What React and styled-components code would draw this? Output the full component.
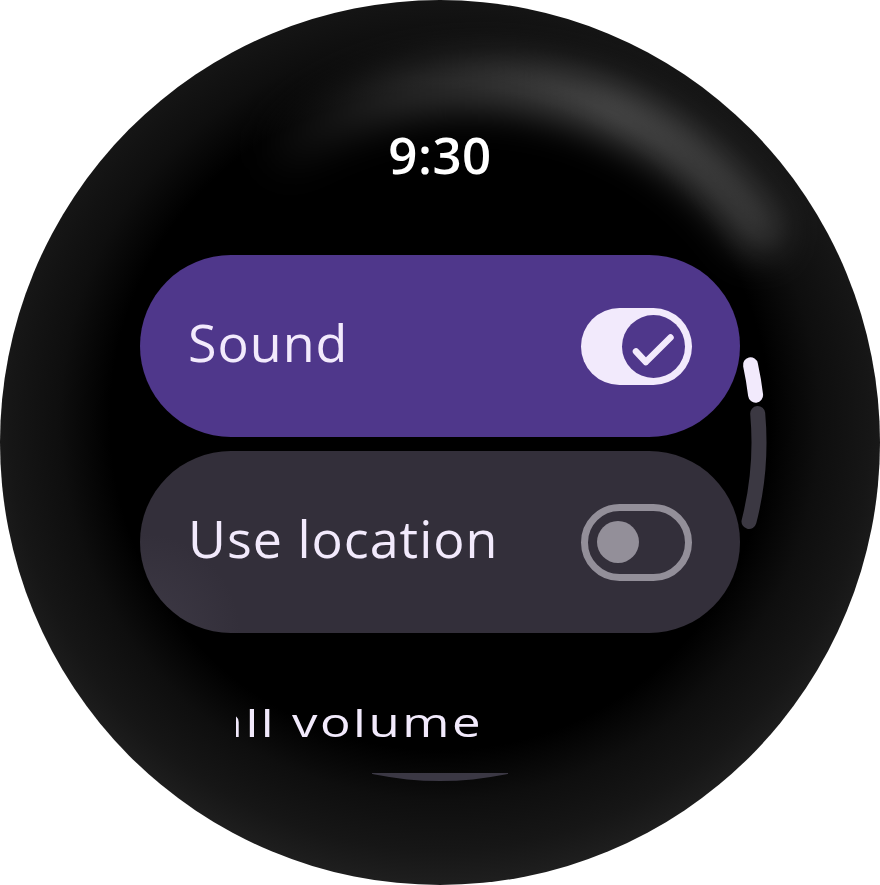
import React from 'react';
import styled, { createGlobalStyle } from 'styled-components';

const GlobalStyle = createGlobalStyle`
  body {
    margin: 0;
    background: #ffffff;
    font-family: 'Open Sans', 'Noto Sans', sans-serif;
  }
`;

const Watch = styled.div`
  position: relative;
  width: 880px;
  height: 885px;
  box-sizing: border-box;
  padding-top: 128px;
  border-radius: 50%;
  overflow: hidden;
  display: flex;
  flex-direction: column;
  align-items: center;
  background: radial-gradient(
    circle at 440px 420px,
    #000 0,
    #000 330px,
    #0e0e0e 380px,
    #161616 430px,
    #202020 470px
  );
`;

const Overlay = styled.svg`
  position: absolute;
  left: 0;
  top: 0;
  width: 880px;
  height: 885px;
  pointer-events: none;
`;

const GlareLayer = styled(Overlay)`
  filter: blur(18px);
  mix-blend-mode: screen;
`;

const Time = styled.div`
  font-size: 51px;
  font-weight: 600;
  line-height: 52px;
  color: #ffffff;
  letter-spacing: 0.5px;
`;

const ChipList = styled.div`
  margin-top: 75px;
  display: flex;
  flex-direction: column;
  gap: 14px;
`;

const Chip = styled.div`
  width: 600px;
  height: 182px;
  box-sizing: border-box;
  padding: 0 48px;
  border-radius: 91px;
  display: flex;
  align-items: center;
  justify-content: space-between;
  background: ${(p) => (p.$checked
    ? '#4f378b'
    : 'radial-gradient(circle at 0% 100%, #3e3a46 0, #332f3a 100px)')};
`;

const Label = styled.span`
  font-size: 52px;
  line-height: 52px;
  letter-spacing: 1px;
  margin-bottom: 8px;
  color: #f2eafc;
  white-space: nowrap;
`;

const Track = styled.div`
  width: 111px;
  height: 77px;
  box-sizing: border-box;
  border-radius: 39px;
  display: flex;
  align-items: center;
  justify-content: ${(p) => (p.$on ? 'flex-end' : 'flex-start')};
  padding: ${(p) => (p.$on ? '0 7px' : '0 0 0 9px')};
  background: ${(p) => (p.$on ? '#f2eafc' : 'transparent')};
  border: ${(p) => (p.$on ? 'none' : '7px solid #938f99')};
`;

const Thumb = styled.div`
  width: ${(p) => (p.$on ? 63 : 42)}px;
  height: ${(p) => (p.$on ? 63 : 42)}px;
  border-radius: 50%;
  background: ${(p) => (p.$on ? '#4f378b' : '#938f99')};
  display: flex;
  align-items: center;
  justify-content: center;
`;

const VolumeClip = styled.div`
  align-self: flex-start;
  margin: 76px 0 0 236px;
  width: 270px;
  height: 36px;
  overflow: hidden;
`;

const VolumeText = styled.div`
  margin: -16px 0 0 -56px;
  font-size: 51px;
  line-height: 49px;
  letter-spacing: 2.5px;
  color: #f2eafc;
  white-space: nowrap;
  transform: scaleY(0.8);
  transform-origin: 0 43px;
`;

const Peek = styled.div`
  margin-top: 28px;
  width: 136px;
  height: 8px;
  background: #3b3844;
  clip-path: circle(334px at 50% -326px);
`;

const Toggle = ({ on }) => (
  <Track $on={on}>
    <Thumb $on={on}>
      {on && (
        <svg width="63" height="63" viewBox="0 0 63 63">
          <path
            d="M14 36.5 L23.8 47 L48.5 22.5"
            fill="none"
            stroke="#f2eafc"
            strokeWidth="6.5"
            strokeLinecap="round"
            strokeLinejoin="round"
          />
        </svg>
      )}
    </Thumb>
  </Track>
);

const Glare = () => (
  <GlareLayer viewBox="0 0 880 885">
    <defs>
      <linearGradient id="glareFade" gradientUnits="userSpaceOnUse" x1="250" y1="0" x2="770" y2="0">
        <stop offset="0" stopColor="#000" />
        <stop offset="0.28" stopColor="#262626" />
        <stop offset="0.7" stopColor="#474747" />
        <stop offset="1" stopColor="#2e2e2e" />
      </linearGradient>
    </defs>
    <path
      d="M285 146 A340 340 0 0 1 758 230"
      fill="none"
      stroke="url(#glareFade)"
      strokeWidth="50"
      strokeLinecap="round"
    />
  </GlareLayer>
);

const ScrollIndicator = () => (
  <Overlay viewBox="0 0 880 885">
    <path
      d="M757.7 413.5 A319 319 0 0 1 749 521.5"
      fill="none"
      stroke="#3b3842"
      strokeWidth="15"
      strokeLinecap="round"
    />
    <path
      d="M750.5 364.8 A319 319 0 0 1 755.6 395.2"
      fill="none"
      stroke="#f2eafc"
      strokeWidth="15"
      strokeLinecap="round"
    />
  </Overlay>
);

const settings = [
  { label: 'Sound', on: true },
  { label: 'Use location', on: false },
];

export default function App() {
  return (
    <>
      <GlobalStyle />
      <Watch>
        <Time>9:30</Time>
        <ChipList>
          {settings.map((s) => (
            <Chip key={s.label} $checked={s.on}>
              <Label>{s.label}</Label>
              <Toggle on={s.on} />
            </Chip>
          ))}
        </ChipList>
        <VolumeClip>
          <VolumeText>Call volume</VolumeText>
        </VolumeClip>
        <Peek />
        <Glare />
        <ScrollIndicator />
      </Watch>
    </>
  );
}
